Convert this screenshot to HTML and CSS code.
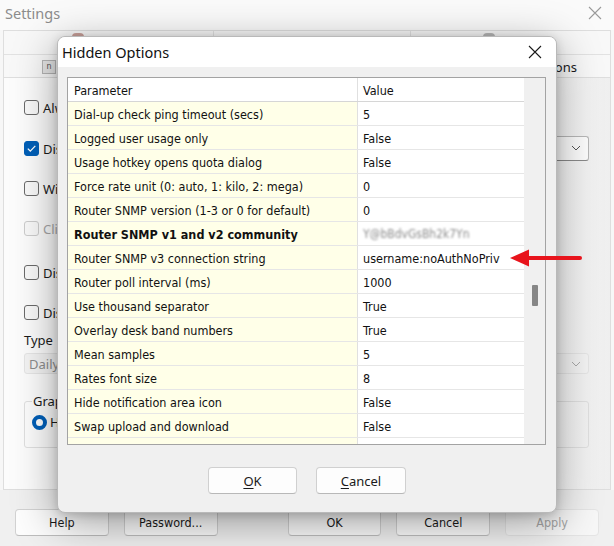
FILE: index.html
```html
<!DOCTYPE html>
<html>
<head>
<meta charset="utf-8">
<title>Hidden Options</title>
<link rel="stylesheet" href="styles.css">
</head>
<body>
<div class="settings">
  <div class="titlebar">
    <span class="win-title">Settings</span>
    <svg class="win-close" width="14" height="14" viewBox="0 0 14 14"><path d="M1 1L13 13M13 1L1 13" stroke="#9a9a9a" stroke-width="1.1" fill="none"/></svg>
  </div>
  <div class="tabs">
    <div class="tabrow">
      <div class="tab t1"><span class="tab-ico red"></span></div>
      <div class="tab t2"></div>
      <div class="tab t3"><span class="tab-ico gray"></span></div>
    </div>
    <div class="tabrow second">
      <span class="mini-ico">n</span>
      <span class="tab-label">ons</span>
    </div>
  </div>
  <div class="panel">
    <div class="chk-row r1"><span class="chk"></span><span class="lbl">Alw</span></div>
    <div class="chk-row r2">
      <span class="chk on"><svg width="15" height="15" viewBox="0 0 15 15"><path d="M3.8 7.6L6.3 10.1L11.3 4.9" stroke="#fff" stroke-width="1.3" fill="none"/></svg></span><span class="lbl">Dis</span>
      <div class="combo top-combo"><svg width="10" height="6" viewBox="0 0 10 6"><path d="M1 1L5 5L9 1" stroke="#555" stroke-width="1" fill="none"/></svg></div>
    </div>
    <div class="chk-row r3"><span class="chk"></span><span class="lbl">Wi</span></div>
    <div class="chk-row r4"><span class="chk off"></span><span class="lbl dim">Cli</span></div>
    <div class="chk-row r5"><span class="chk"></span><span class="lbl">Dis</span></div>
    <div class="chk-row r6"><span class="chk"></span><span class="lbl">Dis</span></div>
    <div class="type-label">Type</div>
    <div class="combo daily"><span>Daily</span><svg width="10" height="6" viewBox="0 0 10 6"><path d="M1 1L5 5L9 1" stroke="#aaa" stroke-width="1" fill="none"/></svg></div>
    <div class="group">
      <span class="group-label">Grap</span>
      <div class="radio-row"><span class="radio"></span><span class="lbl">H</span></div>
    </div>
  </div>
  <div class="bottom-bar">
    <button class="wbtn">Help</button>
    <button class="wbtn">Password...</button>
    <button class="wbtn gap">OK</button>
    <button class="wbtn">Cancel</button>
    <button class="wbtn disabled">Apply</button>
  </div>
</div>

<div class="dialog">
  <div class="dlg-title">
    <span>Hidden Options</span>
    <svg width="14" height="14" viewBox="0 0 14 14"><path d="M1 1L13 13M13 1L1 13" stroke="#1a1a1a" stroke-width="1.1" fill="none"/></svg>
  </div>
  <div class="dlg-body">
    <div class="grid-box">
      <div class="list">
        <div class="row head"><div class="c1">Parameter</div><div class="c2">Value</div></div>
        <div class="row"><div class="c1">Dial-up check ping timeout (secs)</div><div class="c2">5</div></div>
        <div class="row"><div class="c1">Logged user usage only</div><div class="c2">False</div></div>
        <div class="row"><div class="c1">Usage hotkey opens quota dialog</div><div class="c2">False</div></div>
        <div class="row"><div class="c1">Force rate unit (0: auto, 1: kilo, 2: mega)</div><div class="c2">0</div></div>
        <div class="row"><div class="c1">Router SNMP version (1-3 or 0 for default)</div><div class="c2">0</div></div>
        <div class="row"><div class="c1 bold">Router SNMP v1 and v2 community</div><div class="c2"><span class="blurred">Y@bBdvGsBh2k7Yn</span></div></div>
        <div class="row"><div class="c1">Router SNMP v3 connection string</div><div class="c2">username:noAuthNoPriv</div></div>
        <div class="row"><div class="c1">Router poll interval (ms)</div><div class="c2">1000</div></div>
        <div class="row"><div class="c1">Use thousand separator</div><div class="c2">True</div></div>
        <div class="row"><div class="c1">Overlay desk band numbers</div><div class="c2">True</div></div>
        <div class="row"><div class="c1">Mean samples</div><div class="c2">5</div></div>
        <div class="row"><div class="c1">Rates font size</div><div class="c2">8</div></div>
        <div class="row"><div class="c1">Hide notification area icon</div><div class="c2">False</div></div>
        <div class="row"><div class="c1">Swap upload and download</div><div class="c2">False</div></div>
        <div class="row"><div class="c1"></div><div class="c2"></div></div>
      </div>
      <div class="vscroll"><span class="thumb"></span></div>
    </div>
    <div class="dlg-buttons">
      <button class="dbtn ok"><u>O</u>K</button>
      <button class="dbtn cancel"><u>C</u>ancel</button>
    </div>
  </div>
</div>

<svg class="arrow" width="80" height="24" viewBox="0 0 80 24">
  <path d="M20 12H74" stroke="#e8141c" stroke-width="4" stroke-linecap="round"/>
  <path d="M4 12L23 3.5L23 20.5Z" fill="#e8141c"/>
</svg>
</body>
</html>
```

FILE: styles.css
```css
html, body {
  margin: 0;
  padding: 0;
}
body {
  width: 614px;
  height: 546px;
  overflow: hidden;
  position: relative;
  background: #f3f3f3;
  font-family: "Noto Sans", "Open Sans", sans-serif;
}
.settings {
  width: 614px;
  height: 546px;
  display: flex;
  flex-direction: column;
  background: #f7f7f7;
}
.titlebar {
  height: 30px;
  display: flex;
  align-items: center;
  justify-content: space-between;
  padding: 0 12px 0 5px;
  box-sizing: border-box;
  background: #fafafa;
}
.win-title {
  font-size: 14.5px;
  color: #8c8c8c;
  margin-top: -5px;
}
.win-close {
  margin-top: -4px;
}
.tabs {
  margin: 0 3px;
  height: 47px;
  border: 1px solid #dedede;
  border-bottom: none;
  box-sizing: border-box;
  background: #f8f8f8;
}
.tabrow {
  height: 23px;
  display: flex;
  border-bottom: 1px solid #e2e2e2;
}
.tab {
  height: 100%;
  display: flex;
  justify-content: flex-start;
  align-items: flex-start;
}
.t1 { width: 210px; border-right: 1px solid #e2e2e2; padding-left: 68px; box-sizing: border-box; }
.t2 { width: 196px; border-right: 1px solid #e2e2e2; }
.t3 { flex: 1; padding-left: 72px; }
.tab-ico {
  width: 12px;
  height: 4px;
  margin-top: 2px;
  border-radius: 6px 6px 0 0;
}
.tab-ico.red { background: #c9a09a; }
.tab-ico.gray { background: #b8b8b8; }
.tabrow.second {
  align-items: center;
  border-bottom: none;
  padding: 0 33px 0 38px;
}
.mini-ico {
  width: 12px;
  height: 12px;
  border: 1px solid #b5b5b5;
  background: #e5e5e5;
  font-family: "DejaVu Sans", sans-serif;
  font-size: 8px;
  line-height: 11px;
  text-align: center;
  color: #555;
  margin-top: 1px;
}
.tab-label {
  margin-left: auto;
  margin-top: 1px;
  font-size: 13px;
  color: #1a1a1a;
}
.panel {
  margin: 0 3px;
  height: 413px;
  box-sizing: border-box;
  border: 1px solid #dedede;
  background: linear-gradient(90deg, #fcfcfc 0%, #fcfcfc 85%, #efefef 100%);
  padding: 0 21px 0 20px;
  display: flex;
  flex-direction: column;
}
.chk-row {
  height: 15px;
  display: flex;
  align-items: center;
}
.r1 { margin-top: 22px; }
.r2 { margin-top: 26px; }
.r3 { margin-top: 25px; }
.r4 { margin-top: 25px; }
.r5 { margin-top: 29px; }
.r6 { margin-top: 25px; }
.chk {
  width: 15px;
  height: 15px;
  box-sizing: border-box;
  border: 1px solid #6b6b6b;
  border-radius: 3px;
  background: #f9f9f9;
  flex: none;
}
.chk.on {
  background: #005fb8;
  border-color: #005fb8;
}
.chk.on svg {
  display: block;
  margin: -1px;
}
.chk.off {
  border-color: #cdcdcd;
}
.lbl {
  margin-left: 4px;
  font-size: 13px;
  color: #1b1b1b;
}
.lbl.dim { color: #a8a8a8; }
.combo {
  height: 25px;
  box-sizing: border-box;
  border: 1px solid #b8b8b8;
  border-radius: 3px;
  background: #fdfdfd;
  display: flex;
  align-items: center;
  justify-content: flex-end;
  padding-right: 7px;
}
.top-combo {
  width: 220px;
  margin-left: auto;
  margin-top: -1px;
  border-bottom-color: #8a8a8a;
}
.type-label {
  margin-top: 11px;
  height: 17px;
  font-size: 13px;
  color: #1b1b1b;
}
.combo.daily {
  margin-top: 5px;
  height: 21px;
  background: #f4f4f4;
  border-color: #e6e6e6;
  justify-content: space-between;
  padding: 0 7px 0 4px;
  font-size: 13px;
  color: #8d8d8d;
}
.group {
  margin-top: 27px;
  height: 47px;
  box-sizing: border-box;
  border: 1px solid #e0e0e0;
  border-radius: 3px;
  padding: 0 0 0 7px;
  display: flex;
  flex-direction: column;
  align-items: flex-start;
}
.group-label {
  margin-top: -10px;
  background: #fcfcfc;
  padding: 0 1px;
  font-size: 13px;
  color: #1b1b1b;
  line-height: 18px;
}
.radio-row {
  margin-top: 3px;
  display: flex;
  align-items: center;
}
.radio {
  width: 15px;
  height: 15px;
  box-sizing: border-box;
  border-radius: 50%;
  border: 4.5px solid #005fb8;
  background: #fff;
}
.radio-row .lbl { margin-left: 3px; }
.bottom-bar {
  flex: 1;
  display: flex;
  align-items: flex-start;
  padding: 19px 0 0 15px;
  background: #f0f0f0;
}
.wbtn {
  width: 94px;
  height: 27px;
  margin: 0 15px 0 0;
  padding: 0;
  box-sizing: border-box;
  border: 1px solid #d2d2d2;
  border-bottom-color: #bdbdbd;
  border-radius: 4px;
  background: #fdfdfd;
  font-family: "DejaVu Sans Condensed", "DejaVu Sans", sans-serif;
  font-stretch: condensed;
  font-size: 12.5px;
  color: #1a1a1a;
}
.wbtn.gap { margin-left: 55px; }
.wbtn.disabled { color: #a5a5a5; background: #f7f7f7; border-color: #e5e5e5; }

/* dialog */
.dialog {
  position: absolute;
  left: 57px;
  top: 36px;
  width: 500px;
  height: 477px;
  box-sizing: border-box;
  border: 1px solid #b9b9b9;
  border-radius: 8px;
  background: #f0f0f0;
  box-shadow: 0 10px 44px rgba(0, 0, 0, 0.38), 0 2px 10px rgba(0, 0, 0, 0.16);
  overflow: hidden;
  display: flex;
  flex-direction: column;
}
.dlg-title {
  height: 30px;
  flex: none;
  background: #ffffff;
  display: flex;
  align-items: center;
  justify-content: space-between;
  padding: 0 14px 0 4px;
}
.dlg-title span {
  font-size: 14.5px;
  color: #111;
  margin-top: -1px;
}
.dlg-body {
  padding: 10px 10px 18px 9px;
  display: flex;
  flex-direction: column;
}
.grid-box {
  width: 479px;
  height: 368px;
  box-sizing: border-box;
  border: 1px solid #a3a3a3;
  display: flex;
  background: #fff;
  overflow: hidden;
}
.list {
  flex: 1;
  display: flex;
  flex-direction: column;
  font-family: "DejaVu Sans Condensed", "DejaVu Sans", sans-serif;
  font-stretch: condensed;
  font-size: 12.5px;
  color: #111;
}
.row {
  height: 24px;
  flex: none;
  box-sizing: border-box;
  display: grid;
  grid-template-columns: 290px 1fr;
  border-bottom: 1px solid #e6e6e6;
}
.row .c1 {
  background: #ffffe8;
  border-right: 1px solid #e0e0e0;
  padding-left: 6px;
  padding-top: 1px;
  display: flex;
  align-items: center;
  white-space: nowrap;
}
.row .c2 {
  padding-left: 5px;
  padding-top: 1px;
  display: flex;
  align-items: center;
  white-space: nowrap;
}
.row .c1.bold { font-weight: bold; }
.row.head {
  border-bottom-color: #d6d6d6;
}
.row.head .c1 { background: #fff; }
.blurred {
  color: #8a8a8a;
  filter: blur(1.3px);
  font-size: 12px;
}
.vscroll {
  width: 21px;
  flex: none;
  background: #f0f0f0;
  display: flex;
  justify-content: center;
  align-items: flex-start;
}
.thumb {
  margin-top: 207px;
  width: 6px;
  height: 21px;
  border-radius: 1px;
  background: #868686;
}
.dlg-buttons {
  margin-top: 22px;
  display: flex;
  justify-content: center;
  gap: 19px;
  padding-left: 1px;
}
.dbtn {
  height: 27px;
  padding: 0;
  box-sizing: border-box;
  border: 1px solid #d0d0d0;
  border-bottom-color: #b8b8b8;
  border-radius: 4px;
  background: #fdfdfd;
  font-family: "Noto Sans", "Open Sans", sans-serif;
  font-size: 13px;
  color: #1a1a1a;
}
.dbtn.ok { width: 89px; }
.dbtn.cancel { width: 90px; }
.dbtn u { text-underline-offset: 2px; }
.arrow {
  position: absolute;
  left: 506px;
  top: 246px;
}
```
